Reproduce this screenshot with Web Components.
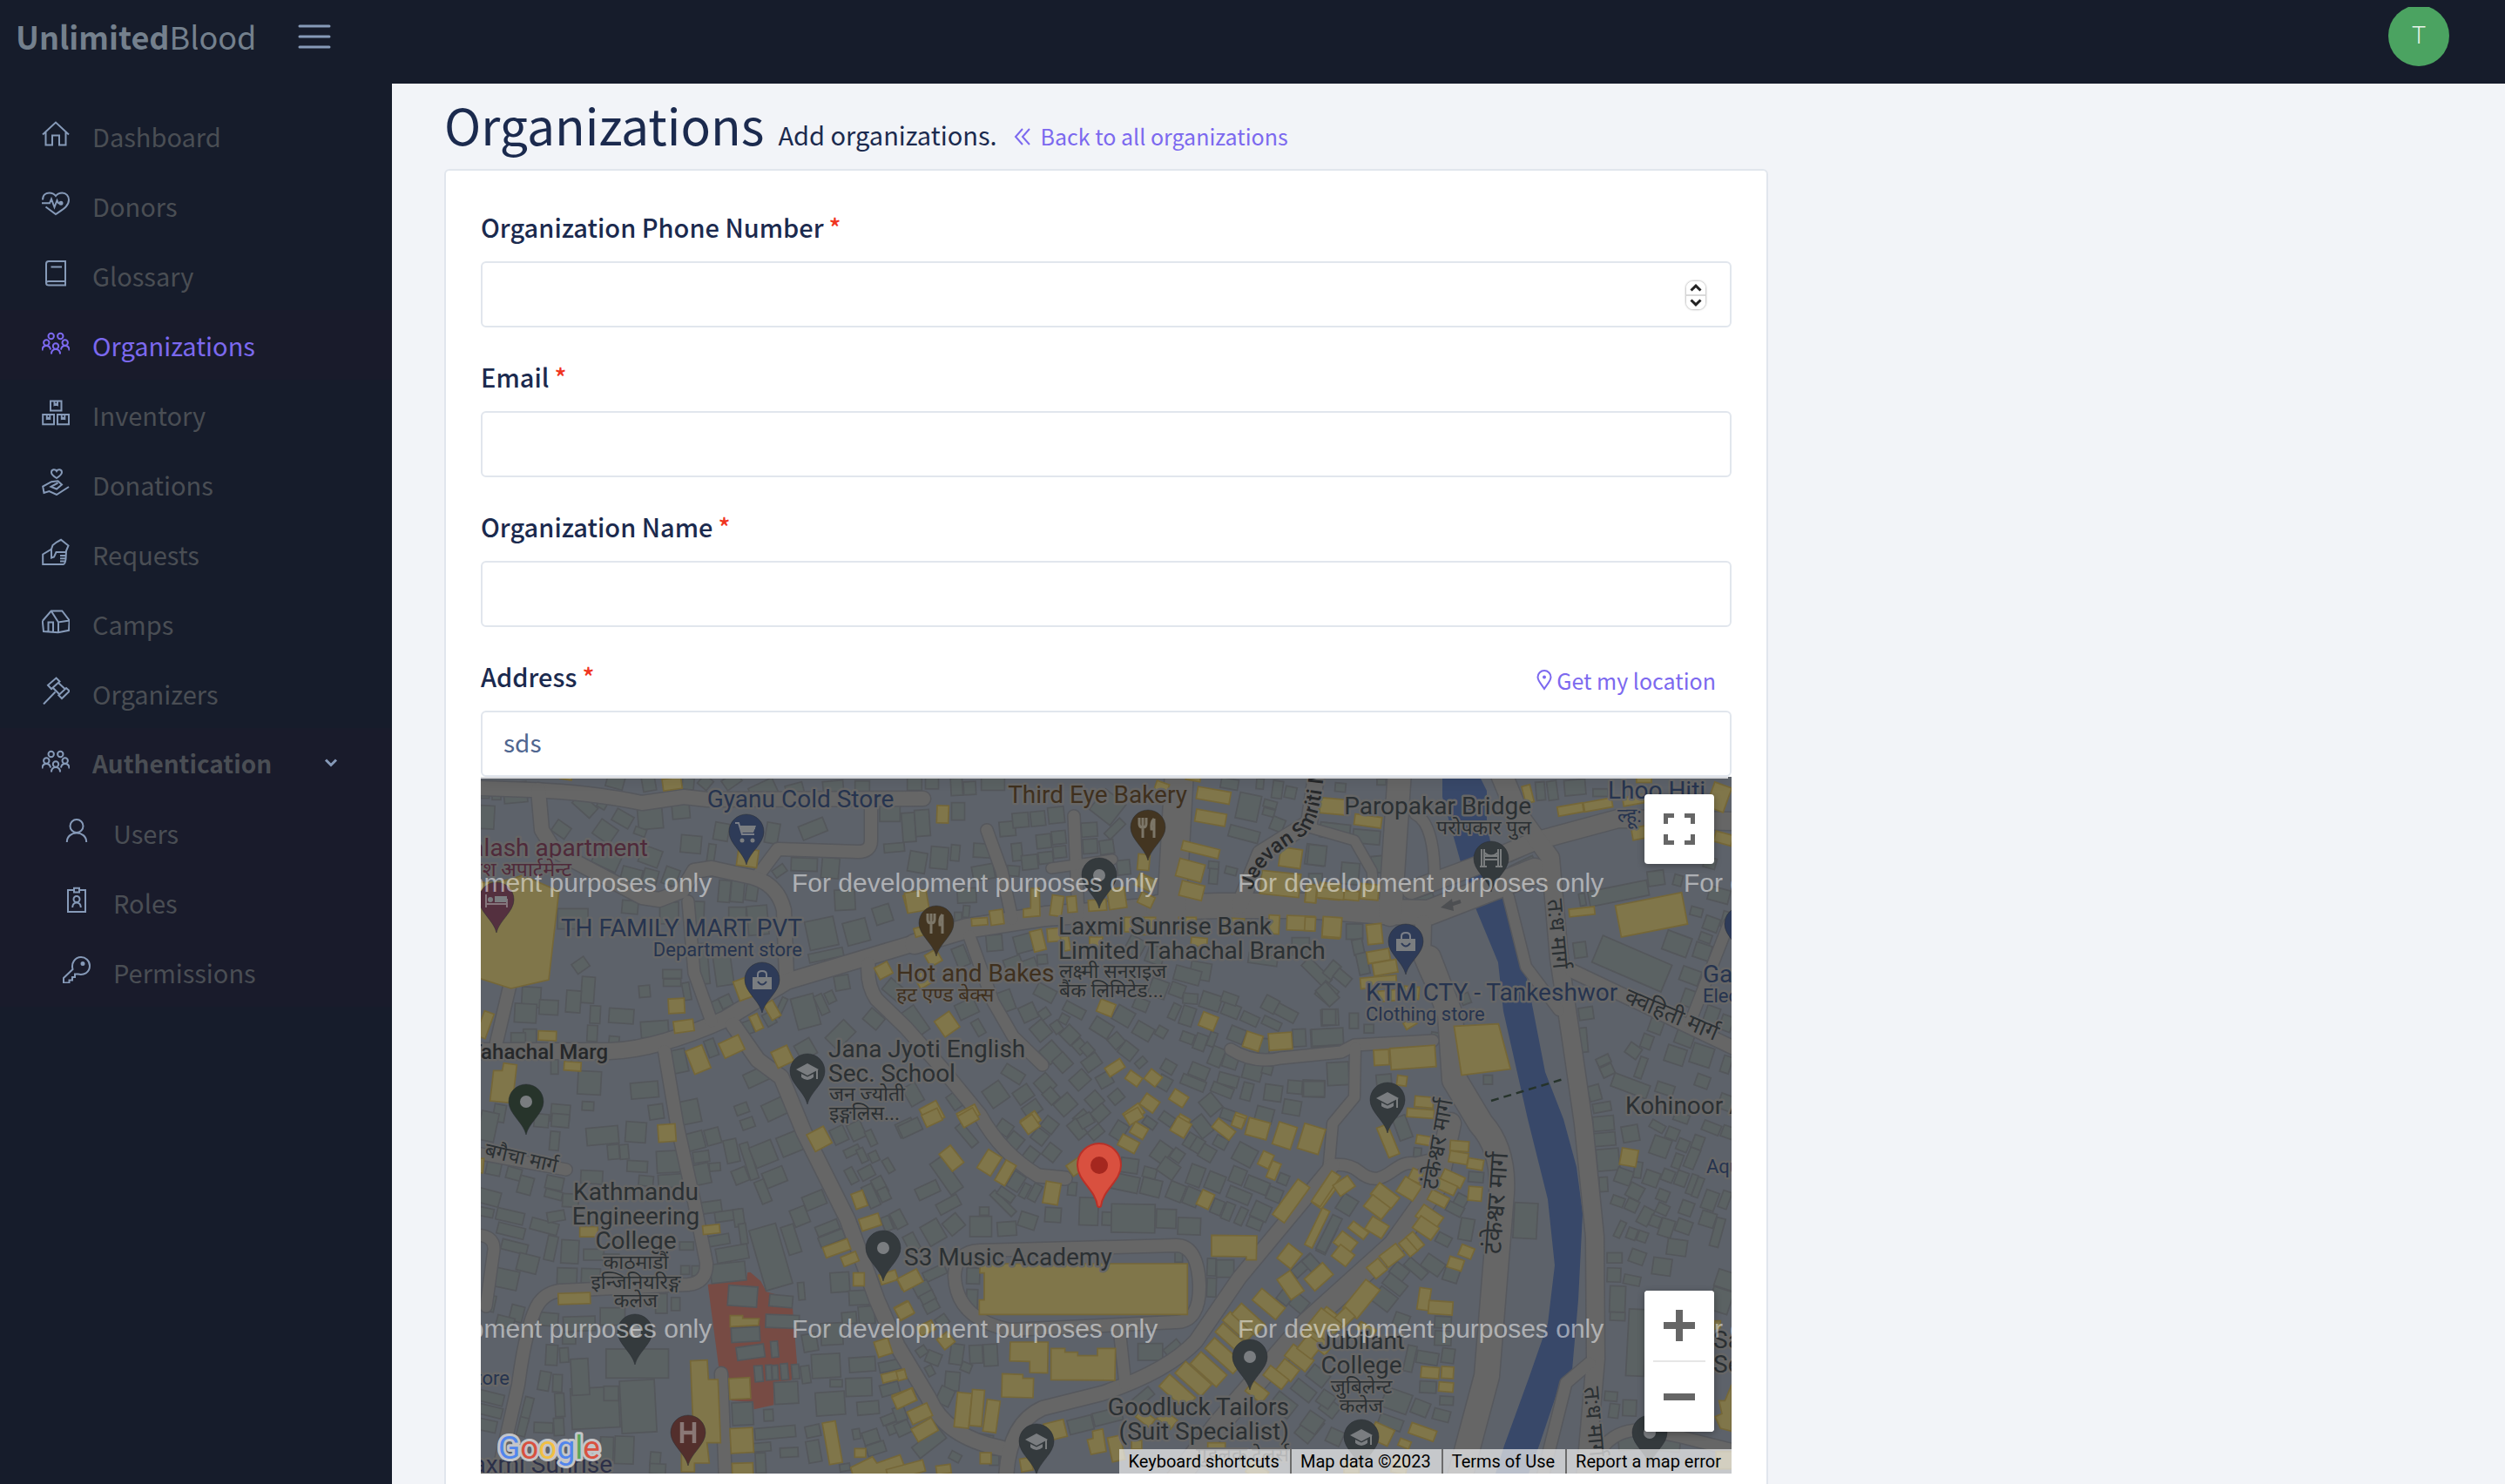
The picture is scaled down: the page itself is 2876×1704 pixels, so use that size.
<!DOCTYPE html>
<html lang="en">
<head>
<meta charset="utf-8">
<title>UnlimitedBlood – Add organizations</title>
<style>
body { margin: 0; background: #f2f4f8; font-family: "Noto Sans CJK JP", "Noto Sans", sans-serif; font-size: 29px; color: #1b2a4e; }
</style>
</head>
<body>
<app-shell>
  <app-header slot="header"></app-header>
  <side-nav slot="nav">
    <nav-item icon="home">Dashboard</nav-item>
    <nav-item icon="donor">Donors</nav-item>
    <nav-item icon="book">Glossary</nav-item>
    <nav-item icon="group" active>Organizations</nav-item>
    <nav-item icon="boxes">Inventory</nav-item>
    <nav-item icon="give">Donations</nav-item>
    <nav-item icon="request">Requests</nav-item>
    <nav-item icon="camp">Camps</nav-item>
    <nav-item icon="gavel">Organizers</nav-item>
    <nav-item icon="group" open>Authentication</nav-item>
    <nav-item icon="user" nested>Users</nav-item>
    <nav-item icon="badge" nested>Roles</nav-item>
    <nav-item icon="key" nested>Permissions</nav-item>
  </side-nav>
  <page-heading heading="Organizations" back="Back to all organizations">Add organizations.</page-heading>
  <form-card>
    <form-field label="Organization Phone Number" type="number"></form-field>
    <form-field label="Email" type="email"></form-field>
    <form-field label="Organization Name" type="text"></form-field>
    <form-field label="Address" type="text" value="sds">
      <locate-link slot="action">Get my location</locate-link>
      <location-map slot="below"></location-map>
    </form-field>
  </form-card>
</app-shell>
<script>
const define = (name, html, init) => customElements.define(name, class extends HTMLElement {
  connectedCallback() {
    if (this.shadowRoot) return;
    const root = this.attachShadow({ mode: 'open' });
    root.innerHTML = typeof html === 'function' ? html(this) : html;
    if (init) init(this, root);
  }
});

const ICONS = {
  home: '<path d="M1 17.5 16 3.5 31 17.5M4.5 15V29.5H12V18.5H20V29.5H27.5V15"/>',
  donor: '<path d="M1 12.5C1 6.5 5 4.5 8.5 4.5C12 4.500 14.500 6 16 8C17.500 6 20 4.500 23.500 4.500C28 4.500 31 8 31 12.500C31 20 24 23.500 16 29L4.500 20.500M0 16.300H9L11 11.500 14.500 21 17.500 13 19 16.300H21"/><circle cx="22" cy="16.300" r="1.500" fill="currentColor"/>',
  book: '<path d="M27 26V3H8Q5 3 5 6V28Q5 30.500 8 30.500H27V26H8Q5 26 5 28M10.500 9.500H23"/>',
  group: '<circle cx="10.700" cy="9" r="3.200"/><circle cx="21.300" cy="9" r="3.200"/><circle cx="5.300" cy="16.500" r="3.200"/><circle cx="26.700" cy="16.500" r="3.200"/><circle cx="16" cy="20.500" r="3.200"/><path d="M.5 25.500C.5 21.500 3 20 5.300 20S9.500 21 10 24.500M31.500 25.500C31.500 21.500 29 20 26.700 20S22.500 21 22 24.500M11 29.500C11 25.500 13 24 16 24S21 25.500 21 29.500"/>',
  boxes: '<path d="M10 3.500H22.500V14.500H10ZM1.200 19H14V30.200H1.200ZM18 19H31V30.200H18Z"/><path d="M14.500 4V8L16.200 7 18 8V4M5.800 20V23.800L7.500 22.800 9.300 23.800V20M22.800 20V23.800L24.500 22.800 26.300 23.800V20"/>',
  give: '<path d="M17 12C12 9 11 7.200 11 5.500C11 1.600 15.500 1.500 17 4C18.500 1.500 23 1.600 23 5.500C23 7.200 21.500 9 17 12Z"/><path d="M18.500 17.500 10.500 21.800 17 24.500 23 19.500 18.500 15.200 11 16.200 1.200 21.500 2.500 29 8.500 27 17 31 31 22"/>',
  request: '<path d="M1.200 19.500 11 13.500 12.500 9 17 5.500 22 2.800 30.500 9.500 28 15.500 27.500 25C27 29.500 26 31 24.500 31H1.200ZM11 13.500V23.500L14 22.500 16.500 17H27.500M21 21H27M21 24.300H27M21 27.500H26.500"/>',
  camp: '<path d="M.8 16 10.700 4.500H23.300L31.700 15.500 19 17.500 10.700 4.500M.8 16 2 28 18.700 29.300 31 26.800 31.700 15.500M19 17.500V29M7.500 28V17.500H13V28.500"/>',
  gavel: '<path d="M2 31.500 15.500 17.500M16.500 1.500 20.500 5.500 11 14 7 9.800ZM28 13 31.800 16.500 23 25 19.300 21.300ZM19 7 26.500 14M13 13 20.500 20.500"/>',
  user: '<circle cx="16" cy="11.500" r="7.500"/><path d="M4.800 30C4.800 16 27.200 16 27.200 30"/>',
  badge: '<path d="M13 5H6V30H26V5H19M13 2.800H19V7.500H13Z"/><circle cx="16" cy="15.500" r="3.500"/><path d="M11.200 25C11.200 17.500 20.800 17.500 20.800 25"/>',
  key: '<path d="M11.500 16 1 26V31.500H7.500V28.500H11V25H14V21.500H17.500C24 23 31 20 31 12C31 6 26 2 21 2C14 2 9.500 9 11.500 16Z"/><circle cx="23" cy="9.500" r="1.500" fill="currentColor"/>'
};
const icon = name => `<svg viewBox="0 0 32 32" width="32" height="32" fill="none" stroke="currentColor" stroke-width="2" aria-hidden="true">${ICONS[name]}</svg>`;

define('app-shell', `
<style>
:host { display: grid; grid-template: auto 1fr / 450px 1fr; height: 100vh; }
header { grid-column: 1 / -1; }
nav { background: #161c2b; }
main { overflow: auto; scrollbar-width: none; display: grid; grid-template-columns: 2fr 1fr; align-content: start; padding: 0 86px 60px 60px; }
::slotted(*:not([slot])) { grid-column: 1; }
</style>
<header><slot name="header"></slot></header>
<nav><slot name="nav"></slot></nav>
<main><slot></slot></main>`);

define('app-header', `
<style>
:host { display: flex; align-items: center; height: 96px; padding: 0 64px 0 18px; background: #161c2b; box-sizing: border-box; }
a { color: #74808d; text-decoration: none; font-size: 36px; line-height: 52px; margin-bottom: 14px; }
.menu { margin: 0 auto 12px 48px; padding: 0; border: 0; background: none; color: #869ab8; line-height: 0; }
.avatar { width: 70px; height: 70px; margin-bottom: 14px; padding: 0; border: 0; border-radius: 50%; background: #4ba361; clip-path: inset(2px 0 0); color: #e8f3ea; font: 300 27px/66px Roboto, sans-serif; }
</style>
<a href="#"><b>Unlimited</b>Blood</a>
<button class="menu" aria-label="Toggle menu"><svg width="38" height="28" viewBox="0 0 38 28" stroke="currentColor" stroke-width="3" stroke-linecap="round"><path d="M2 2H36M2 14H36M2 26H36"/></svg></button>
<button class="avatar">T</button>`);

define('side-nav', `
<style>:host { display: flex; flex-direction: column; padding-top: 20px; }</style><slot></slot>`);

define('nav-item', el => `
<style>
:host { display: block; }
a { display: flex; align-items: center; gap: 26px; height: 80px; padding: 0 62px 0 48px; color: #4a4e54; text-decoration: none; }
.icon { color: #869ab8; line-height: 0; margin-bottom: 6px; }
.chev { margin-left: auto; }
:host([nested]) a { padding-left: 72px; }
:host([nested]) a, :host([open]) a, :host([active]) a { background: #191b2b; }
:host([open]) a { font-weight: 700; font-size: 28px; }
:host([active]) a, :host([active]) .icon { color: #7c69ef; }
</style>
<a href="#"><span class="icon">${icon(el.getAttribute('icon'))}</span><slot></slot>
${el.hasAttribute('open') ? '<svg class="chev" width="16" height="12" viewBox="0 0 16 12" fill="none" stroke="#869ab8" stroke-width="3"><path d="M2 2.500 8 8.500 14 2.500"/></svg>' : ''}</a>`);

define('page-heading', el => `
<style>
:host { display: flex; align-items: baseline; gap: 16px; padding: 12px 0 18px; }
h1 { margin: 0; font-size: 57px; line-height: 68px; font-weight: 400; }
a { color: #7c69ef; text-decoration: none; font-size: 25px; margin-left: 3px; }
svg { margin-right: 11px; }
</style>
<h1>${el.getAttribute('heading')}</h1><slot></slot>
<a href="#"><svg width="20" height="20" viewBox="0 0 20 20" fill="none" stroke="currentColor" stroke-width="2"><path d="M10 1 2 10 10 19M18 1 10 10 18 19"/></svg>${el.getAttribute('back')}</a>`);

define('form-card', `
<style>
:host { display: block; background: #fff; border: 2px solid #e1e6ed; border-radius: 6px; padding: 44px 40px 60px; }
form { display: flex; flex-direction: column; gap: 36px; }
</style><form><slot></slot></form>`);

define('form-field', el => `
<style>
:host { display: block; }
.top { display: flex; justify-content: space-between; align-items: flex-end; margin-bottom: 20px; }
label { font-weight: 500; line-height: 40px; }
i { font-style: normal; color: #f0351f; margin-left: 6px; }
.box { position: relative; }
input { display: block; width: 100%; height: 76px; box-sizing: border-box; padding: 0 24px 4px; border: 2px solid #e1e6ed; border-radius: 6px; background: #fff; color: #506690; font: inherit; font-size: 28px; outline: 0; appearance: textfield; }
input::-webkit-inner-spin-button { appearance: none; }
.step { position: absolute; right: 29px; top: 22px; width: 24px; height: 34px; box-sizing: border-box; display: grid; border: 1px solid #d4d4d4; border-radius: 9px; box-shadow: 0 0 2px rgba(0,0,0,.25); overflow: hidden; }
.step button { display: grid; place-items: center; padding: 0; border: 0; background: #fff; }
.step button + button { border-top: 2px solid #d9d9d9; }
</style>
<div class="top"><label for="f">${el.getAttribute('label')}<i>*</i></label><slot name="action"></slot></div>
<div class="box"><input id="f" type="${el.getAttribute('type')}" value="${el.getAttribute('value') || ''}">
${el.getAttribute('type') === 'number' ? `<div class="step">
<button type="button" aria-label="Increase"><svg width="14" height="9" viewBox="0 0 14 9" fill="none" stroke="#222" stroke-width="3"><path d="M1.500 7.500 7 2.200 12.500 7.500"/></svg></button>
<button type="button" aria-label="Decrease"><svg width="14" height="9" viewBox="0 0 14 9" fill="none" stroke="#222" stroke-width="3"><path d="M1.500 1.500 7 6.800 12.500 1.500"/></svg></button></div>` : ''}
</div><slot name="below"></slot>`);

define('locate-link', `
<style>
:host { display: block; padding-right: 18px; }
a { display: flex; align-items: center; gap: 5px; color: #7c69ef; text-decoration: none; font-size: 25px; line-height: 30px; }
</style>
<a href="#"><svg width="18" height="24" viewBox="0 0 18 24" fill="none" stroke="currentColor" stroke-width="2"><path d="M9 22C5.500 16.500 1.500 12.500 1.500 8.500A7.500 7.500 0 0 1 16.500 8.500C16.500 12.500 12.500 16.500 9 22Z"/><circle cx="9" cy="8.500" r="1" fill="currentColor"/></svg><slot></slot></a>`);

/* Map data. Footprints are "cx cy w h angle" inside a tile; shapes are point lists. */
const TILES = [
{ at: 'translate(550 890) scale(.33333)',
  g: '125 60 80 70 -5;25 145 55 80 3;60 65 30 40 0;20 60 30 40 0;365 105 80 45 42;425 100 30 30 30;495 150 65 45 30;590 150 85 70 -5;695 120 60 60 -5;283 187 55 45 35;435 195 70 60 35;555 195 40 25 20;730 238 70 60 5;590 280 70 60 20;525 345 70 50 15;590 350 50 50 15;660 350 50 60 20;440 290 90 60 25;800 270 25 65 8;835 195 50 60 10;1150 185 90 50 -22;1010 200 45 70 10;1120 308 90 45 2;1210 320 60 70 5;1035 330 45 30 -35;845 400 40 75 5;890 400 45 75 5;940 400 40 65 8;655 475 65 75 0;745 475 60 80 2;520 455 55 45 5;890 480 60 50 0;960 500 70 100 -5;1180 545 100 100 -12;1260 430 70 70 -3;1390 480 60 60 -18;1300 540 80 80 -15;1195 620 120 30 -12;1430 250 70 30 -5;1415 130 70 60 0;323 495 105 70 0;350 655 50 40 -35;375 740 45 90 4;325 780 50 75 4;180 765 65 70 3;240 800 65 50 3;160 820 75 65 3;400 825 35 60 3;390 890 35 55 3;490 830 85 50 4;570 745 38 40 -5;665 685 65 30 0;665 715 60 25 0;715 745 25 60 -10;605 875 95 55 -4;175 900 45 50 0;135 905 50 35 0;465 915 35 30 5;690 985 50 80 -12;800 940 35 60 -20;815 800 40 45 -25;850 780 40 40 -25;770 650 40 140 -5;840 660 60 130 -8;1250 715 50 50 -10;1125 815 80 110 -15;1040 800 20 70 25;1180 790 30 70 -25;1210 765 30 40 -25;925 870 35 45 -20;1000 840 35 45 -30;570 1085 95 55 -5;380 1060 80 80 3;375 1140 40 30 3;955 1040 80 50 -25;1245 895 60 90 45;1125 945 60 60 -30;725 1160 70 80 -12;610 1160 50 50 -8;905 1150 45 35 -20;1020 1150 80 60 -25;280 1165 65 60 5;260 1000 25 60 0;1360 840 60 50 40;70 1165 40 60 10;1430 740 70 50 40;470 20 60 50 15;585 30 45 50 -10;720 30 40 40 5;780 25 40 40 40;870 20 60 40 -35;980 55 90 60 -25;1090 60 60 60 -15;1220 45 70 50 -5;1320 40 50 40 0',
  y: '665 30 65 40 -8;925 285 70 60 8;680 795 55 50 -3;705 865 68 40 -8;235 898 62 32 2;322 1003 58 30 4;755 980 60 85 -22;870 935 75 55 -25;1045 970 60 60 -25;915 735 60 70 -20;955 852 30 55 -25;1010 810 60 35 60;1393 673 50 45 -28;20 860 35 90 20;1485 440 35 60 -15;300 5 40 20 10',
  yp: '0,370 60,370 120,355 150,345 275,400 240,705 110,735 0,700|85,992 130,998 115,1130 38,1122 50,1018 80,1018' },
{ at: 'translate(1030 890) scale(.33333)',
  g: '40 180 45 100 -4;87 165 50 90 -4;205 40 40 60 -3;250 45 42 45 -3;330 30 80 45 0;60 30 50 45 0;120 25 45 45 0;210 125 45 60 0;70 300 60 70 10;145 285 60 75 5;200 268 30 55 5;292 260 58 48 3;297 335 75 50 -10;400 330 42 35 5;380 185 55 50 -5;425 155 55 50 -5;485 150 50 50 -6;548 138 55 55 -6;505 228 50 48 -6;557 215 48 45 -6;413 265 35 60 -6;457 300 55 50 -6;512 285 50 40 -6;560 265 45 40 -6;662 188 55 48 -4;665 245 50 50 -4;722 248 48 48 -8;725 110 90 90 38;750 185 30 75 45;780 318 45 50 -6;240 415 65 50 -3;238 470 22 40 5;210 490 25 35 0;335 578 55 55 -5;435 580 60 60 -15;500 635 35 32 -5;220 625 45 70 -22;400 650 60 45 -20;455 660 55 50 -20;375 778 50 70 -20;510 750 70 45 28;452 818 55 55 -25;240 805 70 55 -25;280 870 30 55 -30;60 850 60 100 -35;495 880 55 60 -40;507 822 35 32 -35;550 868 32 40 -35;575 840 30 30 28;610 810 75 35 28;595 895 50 55 -45;630 935 40 45 -42;530 955 60 60 -42;570 990 50 55 -42;705 870 70 50 32;655 945 35 40 -42;670 990 60 45 -35;755 915 45 45 -42;795 950 55 50 38;780 830 65 55 30;848 882 65 48 30;910 885 35 35 30;840 990 38 25 -42;935 1005 45 40 30;920 1060 45 45 30;715 1050 50 45 -30;630 1050 60 50 -42;510 1065 55 60 -42;400 1030 75 40 32;435 1100 60 50 -35;530 1105 40 50 -42;580 1135 65 55 -42;340 1100 70 70 -35;465 1150 60 45 -35;210 1115 65 55 -35;55 1100 50 70 -30;680 1120 50 50 -42;755 1108 45 40 -40;700 1165 55 45 -42;640 1185 50 50 -42;955 815 28 55 25;1000 830 45 65 18;965 740 50 45 20;1010 770 50 35 5;1080 780 70 55 18;1150 810 60 45 22;1215 840 60 35 25;1290 855 65 30 25;1285 790 50 50 28;1340 820 75 40 28;1145 770 55 35 20;1045 675 70 60 10;1000 690 90 50 15;900 735 60 60 20;840 790 50 40 22;1000 905 45 35 20;1045 920 40 55 20;1085 910 25 50 20;1100 970 45 65 22;1150 980 50 60 18;1170 895 55 50 22;1040 1020 65 45 22;1020 1060 85 35 22;1140 1050 70 40 15;1120 1085 75 35 22;1205 1090 35 60 15;1225 1020 65 60 15;1275 1015 35 30 15;1295 1095 60 55 8;1080 1135 55 65 -40;1140 1170 50 35 20;1265 1170 60 50 15;1360 1145 60 50 10;1370 1075 50 45 5;1435 1080 75 58 2;1265 935 35 55 5;1385 905 45 60 -3;1470 905 90 60 -3;1490 835 60 55 -3;1210 110 75 90 12;1285 100 45 25 15;1280 128 40 25 15;1310 170 45 45 22;1195 203 105 40 15;1090 345 30 60 5;1150 330 40 25 15;1090 310 35 25 5;1145 30 60 35 10;1440 275 65 70 8;1490 190 50 50 5;1310 50 35 60 8;1355 60 38 40 12;1250 30 25 35 5;1445 680 110 40 45;1480 750 60 60 40;1260 635 100 35 8;1390 590 60 60 0;820 590 60 60 28;890 620 60 60 20',
  y: '157 135 40 60 2;68 435 75 70 -10;75 540 30 30 -15;125 630 45 45 -30;95 700 60 50 -30;284 505 55 25 -4;343 490 45 50 -8;550 450 40 70 8;602 445 32 55 -5;690 448 62 38 -4;757 425 60 70 -8;849 300 40 55 5;855 370 60 45 25;858 430 50 40 25;485 570 42 72 -14;545 550 55 45 -5;580 580 28 50 -10;685 575 45 35 0;1040 575 55 30 5;795 515 25 50 0;865 520 50 60 0;1000 510 60 40 0;1150 520 90 55 3;1298 515 36 64 3;1390 510 95 50 2;1495 527 60 70 4;1090 70 115 42 10;1080 147 105 42 10;1045 257 130 32 14;1010 328 90 62 15;1015 398 80 52 14;1355 285 75 65 8;1320 375 135 80 6;1425 418 38 40 5;1490 400 70 55 5;910 45 45 40 20;720 802 55 45 22;172 858 62 65 -35;1072 848 55 50 22;1225 917 58 55 18;1320 917 80 58 -4;750 1008 62 35 -33;815 1045 50 35 35;882 1043 48 42 38;870 1130 55 45 35;970 1113 55 42 32;815 1165 65 40 -35;120 1165 65 65 -28;245 1168 70 40 -28;460 1190 60 40 -35;1180 1185 40 35 20;985 1190 40 30 30;1485 105 60 45 8;1020 10 50 18 10',
  yp: '460,390 490,390 492,485 435,490 435,462 460,458' },
{ at: 'translate(1500 740) scale(.34439 .35077)',
  g: '113 468 35 28 5;250 450 30 20 0;95 610 100 48 6;200 630 90 45 5;270 655 25 45 5;35 690 60 65 6;238 720 42 55 -5;145 750 60 70 5;30 770 45 40 0;780 480 30 60 -5;820 478 32 62 -8;895 468 70 50 -5;980 485 50 25 0;695 680 50 45 -25;720 722 85 28 -25;1165 765 55 48 -8;1040 815 200 50 -11;1238 772 28 35 15;920 835 20 40 -10;1375 820 70 45 15;1300 875 40 28 15;1350 915 50 45 20;1330 960 40 28 20;1235 980 85 65 20;1320 1005 55 50 18;1280 1085 65 48 20;1085 1045 250 95 23;912 1000 42 50 -8;932 1208 48 40 -8;922 1295 28 80 -5;160 940 55 50 0;172 990 35 50 -12;188 1045 35 70 -12;75 1220 45 52 0;158 1232 30 50 0;208 1258 32 28 0;70 1285 105 55 -3;105 1405 72 75 -3;25 1455 70 50 0;430 1285 30 30 10;605 1425 30 30 0;258 1425 50 35 -5;85 1065 35 55 40;120 1090 55 35 40;70 1145 70 45 48;1165 1250 45 45 20;1280 1160 55 55 20;1135 1300 35 45 20;1090 1330 45 40 35;1260 1290 60 45 20;1350 1215 45 60 20;1400 1240 40 50 20;1230 1345 65 55 18;1318 1345 70 65 18;1115 1385 25 70 20;990 1362 45 28 -25;1003 1395 42 35 -25;1080 1445 125 45 20;1195 1455 60 35 18;960 1468 40 50 -15;985 1515 60 30 -10;1320 1430 45 40 20;1400 1500 50 50 20;1400 1375 30 55 18;1345 715 40 35 15;1400 900 30 50 15;385 835 80 20 -18;530 1160 30 35 -20',
  y: '90 530 90 50 5;205 578 90 35 8;738 490 28 58 -15;880 540 85 30 -10;972 525 95 30 -10;1090 510 70 28 -10;1125 443 50 18 0;1375 500 60 85 20;1120 615 70 40 -10;1390 635 60 35 15;1150 885 225 105 -11;918 875 85 25 -6;85 925 62 65 4;12 915 35 45 3;227 948 50 65 -6;240 1020 75 38 -10;262 1058 80 42 -10;240 1105 120 35 -5;80 815 90 35 5;150 822 50 30 5;210 810 60 50 5;15 815 35 60 5;355 1352 150 70 -4;250 1352 50 50 -3;318 1428 32 32 8;392 1498 62 35 5;380 1535 90 28 4;270 1150 60 35 -5;345 1240 40 25 -30;350 1140 50 40 5',
  yp: '492,1250 640,1242 680,1390 517,1410' },
{ at: 'translate(550 1280) scale(.33333)',
  rp: '788,585 922,560 925,543 935,543 970,573 990,610 1027,620 1080,665 1095,855 1075,915 1015,920 1015,1000 947,1015 945,990 870,985 860,905 825,865',
  g: '908 625 100 70 4;1040 642 80 40 5;1045 712 115 45 2;918 757 98 50 -3;935 818 95 45 -8;1018 808 24 55 -5;963 892 28 55 -5;998 888 20 52 -3;1020 888 20 50 -3;1052 885 25 55 -5;1090 885 25 50 -5;1058 958 82 75 -3;908 1030 72 78 -3;1125 895 30 60 -8;997 1035 32 40 -3;1020 1095 140 40 -5;425 72 110 60 -5;540 60 70 70 4;260 90 32 65 5;280 20 60 45 5;215 20 50 45 5;463 128 40 50 -5;500 128 30 50 -5;545 178 70 38 3;652 162 80 75 -3;745 90 60 60 -15;805 75 50 55 -15;765 145 55 38 -8;870 125 45 80 -12;812 180 38 28 -5;765 205 60 70 -12;930 160 30 130 -18;980 135 80 75 -22;1070 100 75 70 -22;900 210 50 50 -22;1018 215 75 55 -22;978 265 35 80 -22;925 30 45 35 -20;388 215 75 45 3;575 228 50 35 5;660 228 85 45 -4;50 185 50 45 12;120 203 50 40 15;160 243 48 60 15;260 235 60 45 12;257 275 60 28 15;35 285 75 50 15;20 335 60 30 12;107 350 95 40 13;110 400 95 38 14;225 385 95 40 15;265 350 60 35 -10;315 295 55 45 3;122 455 90 35 14;168 512 70 60 14;90 565 90 65 12;248 460 35 85 12;313 472 60 80 3;303 557 68 58 2;385 555 65 50 2;395 482 70 38 0;455 500 55 40 0;800 318 70 40 -8;855 348 85 35 -8;895 355 35 60 -8;820 433 85 35 -10;872 478 110 50 -10;910 410 25 70 -8;715 452 48 28 0;710 535 30 30 0;748 538 30 35 0;858 543 120 65 -6;1005 490 95 215 -16;1075 430 45 100 -18;1105 350 55 60 -22;1155 295 75 50 -22;1200 390 80 35 -22;1215 425 90 35 -22;1335 200 50 40 -28;1283 210 30 55 -28;1380 245 40 60 -28;1350 280 38 80 -25;1395 275 35 45 -25;1285 125 55 28 -25;1320 140 25 50 -25;1360 145 30 35 -25;1410 175 25 50 -30;1240 70 50 55 -25;1300 55 50 60 -25;1350 80 25 55 -25;1470 45 60 50 -25;1405 375 30 50 -22;1440 365 35 45 -22;1243 577 65 68 -4;1110 608 22 60 -5;1312 630 75 50 -3;1335 690 55 60 -5;1275 700 50 40 -5;1215 755 75 75 -3;1140 785 50 60 -10;1195 865 98 82 -3;1320 860 90 50 -4;1415 865 75 35 -12;1308 938 90 62 -2;1415 945 65 40 -15;1210 995 100 80 -4;1340 1010 75 45 -5;1230 925 42 25 0;1300 1100 25 35 -10;1350 1110 55 45 -18;1420 1045 70 30 -22;1440 1075 70 35 -22;1367 1150 65 38 -18;1150 1090 50 40 -12;1153 1160 45 75 -10;1260 1215 35 25 -8;1068 1163 62 32 -3;975 1145 60 30 -5;970 1200 35 70 -3;545 857 215 100 0;548 1005 120 180 -3;400 1010 165 140 -3;455 960 50 50 0;348 903 60 125 -3;225 917 38 65 10;270 925 32 60 2;293 828 30 50 -3;250 828 40 70 3;278 1000 32 80 -3;222 1078 65 35 2;275 1075 35 60 -3;165 1015 30 85 14;150 1075 30 65 14;440 1150 45 80 2;500 1155 65 95 2;607 1185 35 45 5;615 1220 55 35 3;240 705 65 45 5;345 720 110 50 -2;310 770 45 40 0;460 695 85 60 0;628 650 40 68 0;677 652 30 45 0;40 650 30 55 12;130 685 45 55 14;90 715 60 40 14;40 975 90 38 14;35 1020 90 35 14;25 1070 70 40 12;30 40 60 100 12',
  y: '647 63 60 60 -4;1172 83 65 65 -28;800 395 58 30 -6;378 403 62 35 0;328 633 110 38 -2;1310 293 42 55 -20;1347 370 70 42 -18;1232 460 90 38 -20;1277 497 55 35 -22;1308 567 38 45 0;1410 560 60 35 -18;1480 570 70 40 -25;1463 675 50 50 -28;1392 802 50 55 -18;1428 900 82 30 -14;1465 975 75 45 -20;898 943 72 72 -3;905 1122 78 85 -3;908 1225 72 50 -2;1217 1130 45 145 -10;1313 1165 38 30 0;5 175 20 50 5',
  yp: '865,692 908,692 908,702 965,702 962,725 865,730|728,848 786,845 790,912 823,912 832,1130 785,1130 793,1200 742,1200 742,1230 697,1230 697,1150 740,1130|1280,1215 1355,1178 1370,1200 1450,1172 1465,1210 1440,1250 1290,1250' },
{ at: 'translate(1030 1280) scale(.33333)',
  g: '45 45 75 45 -25;240 70 30 90 -40;170 210 50 130 -35;105 260 80 42 -25;177 310 80 40 -28;125 405 65 75 -30;195 378 60 55 -40;50 440 40 60 -28;5 360 40 60 -28;288 385 75 70 0;300 332 32 28 0;378 393 65 48 -4;450 365 60 50 18;537 345 55 50 4;365 305 25 105 -45;375 275 60 30 35;405 90 50 50 40;370 45 50 45 35;462 138 45 45 38;532 130 50 50 38;492 75 50 45 38;525 35 50 45 38;410 230 45 60 32;440 262 25 50 28;475 268 30 60 28;603 255 30 45 5;660 333 65 95 2;722 358 32 45 2;800 175 60 50 8;785 235 95 55 12;813 357 150 98 1;927 358 68 65 2;1006 384 78 58 2;875 250 68 58 14;870 200 45 35 15;620 50 65 40 50;685 60 50 35 -40;650 20 50 40 -30;765 55 45 60 32;910 130 55 65 35;935 185 65 55 35;965 140 40 40 35;1010 90 35 50 32;1035 105 35 50 32;1068 132 50 48 30;1050 40 50 70 -38;1115 95 45 38 28;870 28 45 30 35;930 15 50 35 35;1198 138 72 65 28;1028 210 50 70 20;960 265 55 60 22;1015 283 50 60 22;1095 232 60 60 22;1173 210 50 55 22;1240 243 80 45 22;1178 278 80 42 22;1300 275 50 45 22;1330 222 35 35 22;1103 318 38 50 22;1140 333 32 60 22;1185 350 28 60 25;1253 333 60 55 25;1232 375 50 35 22;1083 525 30 60 2;1130 530 60 60 0;1083 595 32 65 2;262 555 45 55 2;258 637 38 70 2;970 488 26 40 0;130 545 80 35 -25;87 600 55 45 -28;105 630 50 35 -28;118 660 50 35 -28;155 710 40 35 -35;872 817 85 58 0;950 805 60 35 -40;205 825 45 70 8;272 825 45 62 -3;322 828 48 75 -3;125 838 50 42 22;85 815 35 30 -35;113 882 25 35 -28;238 870 35 30 22;190 918 50 65 5;165 970 50 60 25;632 1068 85 50 -14;725 1040 100 45 -14;845 975 80 35 -40;293 1115 75 30 8;110 1130 115 48 -38;200 1178 38 28 28;335 1190 32 35 0;1385 650 55 50 40;1335 630 45 40 38;1400 520 90 35 -42;1480 430 35 100 26;1400 950 80 45 38;1450 900 70 50 38;1330 1000 80 60 38;1420 1080 90 60 -50;1490 1010 60 50 38;20 1080 50 45 -25;10 1030 40 50 -20',
  y: '120 10 60 45 -25;245 10 60 45 -30;458 33 50 50 -35;815 5 55 40 -30;833 55 52 42 30;797 100 65 42 28;977 43 55 55 30;1125 50 75 38 38;1175 25 38 38 20;1242 48 75 60 15;1335 72 65 80 18;1427 83 75 90 17;187 150 50 75 -38;318 165 55 75 32;373 200 40 80 30;533 270 52 75 10;615 180 50 45 -35;1270 155 40 50 25;1297 192 32 60 22;1062 292 45 55 25;1357 297 50 150 36;1480 265 40 120 36;1447 390 28 140 26;1352 487 60 65 38;1355 587 55 85 -35;1452 558 85 55 -42;1280 652 105 52 40;227 1018 50 120 6;275 1010 42 125 5;325 1038 45 110 8;45 570 75 50 -28;25 675 55 45 -28;100 735 55 35 -25;168 778 45 45 -38;15 897 30 32 -15;25 978 75 45 -25;78 1030 75 48 -25;95 1085 80 50 -30;1175 730 110 40 42;1210 705 110 50 42;1150 770 110 40 42;1125 830 130 50 42;1073 877 120 55 42;1020 910 120 55 42;965 955 120 55 42;1385 838 90 50 38;1345 880 65 50 38;1305 905 80 42 38;1240 955 70 45 38;1450 770 110 60 40;1480 700 50 60 38;545 1087 70 60 -14;755 1150 45 85 -12;445 1205 40 45 -10;305 1183 38 38 0;160 1222 50 30 -8;30 1225 130 40 -15;930 1050 60 40 38;855 1045 60 35 38;825 1137 35 30 0;1100 1140 60 20 0;1240 1230 70 40 30',
  yp: '1083,415 1239,417 1237,500 1203,500 1203,489 1083,487|285,513 1000,513 1000,688 283,688 283,638 300,638 300,545 285,545|390,783 520,783 518,890 457,888 457,850 388,848|530,805 578,805 578,818 622,818 622,830 690,830 690,805 752,805 750,915 530,913|362,892 433,895 433,908 470,908 468,975 360,972|655,1120 675,1115 673,1090 708,1082 720,1160 668,1170' },
{ at: 'translate(1500 1280) scale(.34439 .33333)',
  g: '320 45 45 80 -20;370 130 25 32 5;565 215 50 35 5;533 395 45 75 10;457 430 48 35 28;515 295 40 40 28;495 325 55 35 28;422 518 70 50 35;483 550 50 50 18;365 530 80 35 42;310 540 55 45 38;295 585 75 45 38;260 635 70 60 38;135 310 55 60 32;75 410 35 130 26;730 365 78 122 3;990 30 70 50 -5;990 85 80 45 -5;1005 155 75 75 -5;990 240 28 50 -3;1080 65 55 55 -10;1058 213 55 50 20;1105 190 25 55 8;1150 220 50 50 20;1095 265 50 50 28;1038 298 42 32 20;1085 312 40 40 25;1188 278 38 38 22;1205 210 40 40 22;1250 220 38 50 20;1237 160 28 50 20;1285 150 35 70 22;1180 110 60 65 20;1255 105 38 40 22;1305 95 35 45 20;1220 65 40 40 22;1350 45 60 35 22;1170 40 50 28 30;1405 60 40 40 20;1250 10 50 30 20;1285 240 22 70 20;1305 250 22 70 20;1345 295 45 65 20;1395 293 30 60 20;1267 322 42 48 20;1130 350 40 60 28;1163 367 35 38 20;1187 325 40 35 25;1200 390 45 60 18;1258 385 50 45 20;1338 360 50 50 18;1370 405 30 100 15;1045 395 22 58 25;1085 410 32 38 20;1120 420 32 35 20;1235 457 65 55 8;1103 490 50 45 20;1185 523 62 58 8;1027 493 50 35 0;1025 552 45 48 2;1085 570 55 32 12;1037 635 52 90 2;1037 695 50 28 2;1100 785 60 230 3;1400 570 70 60 18;1380 640 70 80 18;1015 970 42 32 5;1025 1020 32 48 8;1077 1010 45 55 2;455 715 55 40 3;455 770 55 50 3;403 838 72 42 10;472 830 42 50 8;345 840 30 90 12;405 938 55 40 3;467 985 45 30 3;380 1010 55 50 22;450 1035 55 38 15;300 985 90 70 20;280 1060 80 40 20;315 710 50 50 20;95 1110 50 50 25;20 1060 60 60 35;65 980 50 50 35;1210 1140 70 40 5;1080 1130 80 50 -5;15 510 40 50 -42',
  y: '272 90 38 110 -22;392 88 52 30 10;510 108 62 35 4;507 148 62 38 10;563 170 52 35 10;562 272 45 48 5;487 220 75 40 25;465 248 70 35 25;440 290 65 38 28;365 210 40 40 25;342 255 65 60 32;262 280 85 50 38;235 318 75 50 38;410 352 80 50 35;398 390 75 50 35;235 388 65 50 32;340 455 35 60 -40;362 435 30 60 -40;285 485 70 50 -38;235 530 50 50 -40;173 398 65 30 38;130 440 65 50 38;122 485 60 50 38;65 255 35 125 33;125 245 60 45 -35;533 472 45 38 22;497 513 50 38 18;183 635 60 125 38;125 700 60 45 -45;60 725 90 80 38;392 635 38 75 8;447 665 80 45 4;200 740 60 30 30;10 800 60 60 38;412 888 60 38 5;470 888 40 40 3;465 938 48 32 5;387 1093 88 38 20;250 1100 70 60 25;327 1133 38 26 22;1075 147 55 58 10;150 1215 50 40 0;310 1210 50 50 10;1370 725 20 30 0;1395 1190 60 60 0',
  yp: '1417,930 1395,985 1375,985 1385,1030 1362,1040 1380,1080 1417,1090' }
];

/* "width|path" */
const ROADS = [
 '16|M552 905L610 907Q680 910 737 922L785 915 812 918L1060 917','14|M1000 919V965Q1000 978 985 978L893 975 872 1003',
 '16|M618 907L622 953 637 977 737 1030 757 1033 783 1023 797 1000 817 997 863 1007Q893 1015 900 1045L903 1120',
 '18|M552 1207H700Q755 1205 833 1170L903 1127 1050 1083','22|M1050 1084L1110 1066 1200 1052 1330 1042','28|M1330 1042L1400 1040 1500 1040 1590 1047 1640 1048 1720 1017 1762 1000',
 '20|M1620 1022L1693 995 1762 966 1858 940 1988 943','13|M790 1035L797 1117 817 1173','17|M842 1177L870 1217 897 1237 923 1300 973 1400 1007 1493 1030 1545 1066 1605Q1085 1650 1150 1663',
 '14|M763 1207L777 1290 797 1380 811 1450Q812 1473 790 1475L643 1482Q622 1485 614 1505Q603 1530 595 1590L570 1700','14|M585 1133L570 1197','13|M545 1418Q568 1418 567 1435L558 1500',
 '13|M1133 953L1150 1000 1162 1055','13|M1233 937L1238 1050','11|M1207 997L1277 987','13|M1113 1075L1140 1150 1163 1190 1197 1223',
 '15|M997 1107Q995 1130 1006 1147L1040 1180 1080 1225 1125 1280Q1150 1325 1192 1350L1223 1353','32|M1354 885L1345 1045','18|M1512 885L1503 945 1447 980 1423 1040','11|M1503 950L1555 965 1575 1000 1578 1030','26|M1607 885L1596 1050',
 '12|M1625 935Q1647 945 1647 1010','24|M1722 885L1745 940','20|M1740 930L1780 985 1790 1100 1805 1200 1818 1290 1831 1420 1832 1560 1820 1700','12|M1732 1030L1752 1110 1790 1160',
 '18|M1634 1060L1633 1100Q1645 1130 1665 1165','28|M1640 1100L1665 1165 1670 1240 1700 1290Q1727 1320 1724 1370L1707 1580 1675 1700','13|M1413 1205Q1440 1222 1470 1215L1540 1208 1555 1200 1645 1195','12|M1556 1203L1555 1260 1530 1290 1526 1335',
 '13|M1526 1338Q1548 1335 1560 1345C1590 1370 1600 1330 1625 1336L1650 1330','24|M1665 1290L1650 1360 1600 1430 1500 1520 1400 1635 1350 1700','16|M1530 1338L1423 1467 1373 1540Q1340 1575 1265 1600L1197 1617Q1157 1635 1155 1700',
 '14|M1096 1465Q1097 1437 1125 1436L1350 1430Q1375 1430 1377 1475 1378 1518 1350 1518L1160 1527Q1098 1515 1096 1465Z','13|M1285 1525L1292 1590','14|M828 1577L833 1700','15|M1805 1115L1990 1203','12|M1985 1060L1940 1175',
 '13|M1825 1565L1798 1588 1770 1700','13|M1838 1665Q1855 1640 1890 1642L1930 1650 1990 1665','13|M552 1325L650 1343'
].map(r => r.split('|'));

const PIN_ICONS = {
  dot: '<circle cy="-38" r="7"/>',
  cart: '<path d="M-13-48H-9L-5-35H9M-7-42H10" fill="none" stroke="#7b7f88" stroke-width="2"/><path d="M-8-45H11L8-37H-6Z"/><circle cx="-5" cy="-28" r="2.500"/><circle cx="7" cy="-28" r="2.500"/>',
  bag: '<path d="M-11-41H11V-27H-11Z"/><path d="M-5-41V-44Q-5-48 0-48T5-44V-41" fill="none" stroke="#7b7f88" stroke-width="2"/><path d="M-5-36Q0-29 5-36" fill="none" stroke="#2e3b58" stroke-width="2"/>',
  bed: '<path d="M-12-44V-29M-12-33H12M12-29V-39" fill="none" stroke="#85757c" stroke-width="2"/><circle cx="-7" cy="-38" r="3"/><path d="M-2-42H12V-35H-2Z"/>',
  food: '<path d="M-10-49V-42Q-10-38-6-38V-26M-6-49V-38M-2-49V-42Q-2-38-6-38M7-48V-26M7-48Q3-44 4-36H7" fill="none" stroke="#7c7668" stroke-width="3"/>',
  school: '<path d="M-13-40 0-47 13-40 0-33Z"/><path d="M-7-35V-31Q0-25 7-31V-35L0-31.500Z"/><path d="M11-40V-29" stroke="#7a7d7e" stroke-width="2"/>',
  bridge: '<path d="M-11-49V-29M-8-49V-29M11-49V-29M8-49V-29M-8-37H8M-8-41H8M-13-29H-5M13-29H5M-8-45Q0-38 8-45" fill="none" stroke="#7a7d7e" stroke-width="2"/>',
  H: '<path d="M-7-50V-26M7-50V-26M-7-38H7" fill="none" stroke="#8a7876" stroke-width="4.500"/>'
};
const PINS = [[857,993,'cart','#2e3b58'],[875,1163,'bag','#2e3b58'],[570,1071,'bed','#54303f'],[604,1303,'dot','#27342b'],[927,1268,'school','#343a3d'],[1318,988,'food','#433521'],[1075,1098,'food','#433521'],[1262,1043,'dot','#343a3d'],[1014,1471,'dot','#343a3d'],[729,1567,'dot','#343a3d'],[790,1683,'H','#532f2c'],[1190,1693,'school','#343a3d'],[1435,1596,'dot','#343a3d'],[1712,1024,'bridge','#343a3d'],[1614,1119,'bag','#2e3b58'],[1593,1301,'school','#343a3d'],[1563,1688,'school','#343a3d'],[1894,1683,'dot','#343a3d'],[2000,1099,'bag','#2e3b58']];

/* x, baseline, text, anchor, class, rotation */
const LABELS = [
 [919,927,'Gyanu Cold Store','m','b'],[744,983,'Kalash apartment','e','p'],[656,1006,'कलश अपार्टमेन्ट','e','p h'],[921,1075,'TH FAMILY MART PVT','e','b'],[921,1098,'Department store','e','b s'],
 [698,1216,'Tahachal Marg','e','r'],[1260,922,'Third Eye Bakery','m','o'],[1029,1127,'Hot and Bakes','s','o'],[1029,1150,'हट एण्ड बेक्स','s','o h'],
 [1215,1073,'Laxmi Sunrise Bank','s','k'],[1215,1101,'Limited Tahachal Branch','s','k'],[1216,1123,'लक्ष्मी सनराइज','s','k h'],[1216,1145,'बैंक लिमिटेड...','s','k h'],
 [951,1214,'Jana Jyoti English','s','k'],[951,1242,'Sec. School','s','k'],[952,1264,'जन ज्योती','s','k h'],[952,1286,'इङ्गलिस...','s','k h'],
 [730,1378,'Kathmandu','m','k'],[730,1406,'Engineering','m','k'],[730,1434,'College','m','k'],[730,1457,'काठमाडौं','m','k h'],[730,1480,'इन्जिनियरिङ्ग','m','k h'],[730,1501,'कलेज','m','k h'],
 [1038,1453,'S3 Music Academy','s','k'],[597,1337,'बगैचा मार्ग','m','k h',13],[585,1590,'Store','e','b s'],[703,1691,'Laxmi Sunrise','e','v'],
 [1480,1625,'Goodluck Tailors','e','k'],[1480,1653,'(Suit Specialist)','e','k'],[1480,1678,'गुडलक टेलर्स','e','k h'],
 [1563,1549,'Jubilant','m','k'],[1563,1577,'College','m','k'],[1563,1600,'जुबिलेन्ट','m','k h'],[1563,1622,'कलेज','m','k h'],
 [1758,935,'Paropakar Bridge','e','k'],[1758,958,'परोपकार पुल','e','k h'],[1846,917,'Lhoo Hiti','s','b'],[1857,944,'ल्हू:','s','b h'],
 [1568,1149,'KTM CTY - Tankeshwor','s','b'],[1568,1172,'Clothing store','s','b s'],[1955,1128,'Ga','s','b'],[1955,1151,'Elec','s','b s'],
 [1866,1279,'Kohinoor A','s','k'],[1959,1347,'Aqu','s','b s'],[1967,1548,'Sa','s','k'],[1967,1576,'Se','s','k'],
 [1659,1315,'टंकेश्वर मार्ग','m','k h j',-80],[1727,1382,'टंकेश्वर मार्ग','m','k h l',-86],[1780,1073,'त:ध मार्ग','m','k h j',85],[1822,1633,'त:ध मार्ग','m','k h j',85],[1916,1173,'क्वहिती मार्ग','m','k h j',23]
];

const rects = (s, c) => `<g class="${c}">` + s.split(';').map(r => { const [x, y, w, h, a] = r.split(' ').map(Number); return `<rect x="${x - w / 2}" y="${y - h / 2}" width="${w}" height="${h}" transform="rotate(${a || 0} ${x} ${y})"/>`; }).join('') + '</g>';
const polys = (s, c) => s ? `<g class="${c}">` + s.split('|').map(p => `<polygon points="${p}"/>`).join('') + '</g>' : '';
const tiles = f => TILES.map(t => `<g transform="${t.at}">${f(t)}</g>`).join('');
const ANCHOR = { s: 'start', m: 'middle', e: 'end' };

const mapSvg = () => `
<svg class="map" viewBox="552 892 1436 800" preserveAspectRatio="xMidYMid slice" role="img" aria-label="Map">
<defs><path id="jeevan" d="M1437 1023C1448 992 1468 976 1492 963 1512 950 1516 930 1522 870"/></defs>
<polygon fill="#384869" points="1656,890 1656,915 1670,965 1677,990 1693,1040 1720,1105 1726,1161 1754,1285 1777,1377 1785,1453 1777,1520 1755,1583 1727,1660 1717,1692 1755,1692 1767,1660 1793,1583 1805,1573 1812,1493 1817,1393 1810,1340 1795,1285 1774,1231 1755,1133 1741,1070 1727,1028 1707,950 1707,908 1698,890"/>
${tiles(t => polys(t.rp, 'red') + rects(t.g, 'grey'))}
<g fill="none" stroke="#56585d" stroke-linecap="round" stroke-linejoin="round">${ROADS.map(([w, d]) => `<path stroke-width="${+w + 3}" d="${d}"/>`).join('')}</g>
<g fill="none" stroke="#666" stroke-linecap="round" stroke-linejoin="round">${ROADS.map(([w, d]) => `<path stroke-width="${w}" d="${d}"/>`).join('')}</g>
${tiles(t => polys(t.yp, 'gold') + rects(t.y, 'gold'))}
<path d="M1712 1264 1795 1239" stroke="#26332b" stroke-width="2.500" stroke-dasharray="9 6"/>
<path d="M1677 1035 1662 1040" stroke="#4d4f52" stroke-width="4"/><path fill="#4d4f52" d="M1654 1042 1667 1032 1669 1046Z"/>
<g class="labels">${LABELS.map(([x, y, t, a, c, r]) => `<text x="${x}" y="${y}" text-anchor="${ANCHOR[a]}" class="${c}"${r ? ` transform="rotate(${r} ${x} ${y})"` : ''}>${t}</text>`).join('')}
<text class="r"><textPath href="#jeevan">Jeevan Smriti M</textPath></text></g>
${PINS.map(([x, y, k, c]) => `<g transform="translate(${x} ${y})"><path fill="${c}" stroke="#2a2e33" stroke-opacity=".5" d="M0 0C-3-14-20-24-20-38A20 20 0 1 1 20-38C20-24 3-14 0 0Z"/><g fill="#7a7d80">${PIN_ICONS[k]}</g></g>`).join('')}
<g transform="translate(1262 1386)"><path fill="#d9503f" stroke="#b93128" stroke-width="2" d="M-2-1C-4-20-25-30-25-48A25 25 0 1 1 25-48C25-30 4-20 2-1Q0 1-2-1Z"/><circle cy="-48" r="10" fill="#a5271f"/></g>
<g class="mark">${[1024, 1536].map(y => [397, 909, 1421, 1933].map(x => `<text x="${x}" y="${y}">For development purposes only</text>`).join('')).join('')}</g>
<text class="logo" x="572" y="1675"><tspan fill="#5286ec">G</tspan><tspan fill="#d85140">o</tspan><tspan fill="#f1bf42">o</tspan><tspan fill="#5286ec">g</tspan><tspan fill="#58a55c">l</tspan><tspan fill="#d85140">e</tspan></text>
</svg>`;

define('location-map', () => `
<style>
:host { display: block; position: relative; height: 800px; overflow: hidden; background: #5d626a; }
.map { display: block; width: 100%; height: 100%; }
.grey { fill: #5b6263; stroke: #54575b; stroke-width: 5; }
.gold { fill: #80764a; stroke: #756738; stroke-width: 5; }
.red { fill: #774b44; }
.labels { font: 28px Roboto, "Noto Sans Devanagari", "Noto Sans", sans-serif; paint-order: stroke; stroke: #666; stroke-width: 5px; stroke-linejoin: round; }
.k { fill: #2b3033; } .b { fill: #26344f; } .p { fill: #4f2a3a; } .o { fill: #3f301e; } .v { fill: #2c3048; } .r { fill: #26282a; font-size: 24px; font-weight: 500; }
.s { font-size: 22px; }
.h { font-size: 23px; font-weight: 400; stroke-width: 4px; }
.j { font-size: 26px; } .l { font-size: 29px; }
.mark { font: 30px "Liberation Sans", Arial, sans-serif; fill: #fff; fill-opacity: .5; }
.logo { font: 400 37px Roboto, sans-serif; paint-order: stroke; stroke: #c3c5c8; stroke-width: 6px; stroke-linejoin: round; }
.edge { position: absolute; top: 0; left: 0; right: 4px; height: 2px; background: #d9dadd; box-shadow: 0 2px 12px rgba(0,0,0,.3); }
button { display: grid; place-items: center; padding: 0; border: 0; background: #fff; color: #666; width: 80px; }
.full { position: absolute; top: 20px; right: 20px; height: 80px; border-radius: 4px; box-shadow: 0 2px 8px rgba(0,0,0,.3); }
.zoom { position: absolute; right: 20px; bottom: 48px; border-radius: 4px; background: #fff; box-shadow: 0 2px 8px rgba(0,0,0,.3); overflow: hidden; }
.zoom button { height: 80px; }
.zoom hr { margin: 0 10px; height: 2px; border: 0; background: #e6e6e6; }
.legal { position: absolute; right: 0; bottom: 0; display: flex; font: 20px/28px Roboto, sans-serif; background: rgba(255,255,255,.65); }
.legal a { color: #000; text-decoration: none; padding: 0 12px 0 10px; }
.legal a + a { border-left: 2px solid #6b6b6b; }
</style>
${mapSvg()}
<div class="edge"></div>
<button type="button" class="full" aria-label="Full screen"><svg width="36" height="36" viewBox="0 0 36 36" fill="none" stroke="currentColor" stroke-width="5"><path d="M2.500 12V2.500H12M24 2.500H33.500V12M33.500 24V33.500H24M12 33.500H2.500V24"/></svg></button>
<div class="zoom"><button type="button" aria-label="Zoom in"><svg width="36" height="36" viewBox="0 0 36 36" stroke="currentColor" stroke-width="8"><path d="M0 18H36M18 0V36"/></svg></button><hr><button type="button" aria-label="Zoom out"><svg width="36" height="8" viewBox="0 0 36 8" fill="currentColor"><path d="M0 0H36V8H0Z"/></svg></button></div>
<div class="legal"><a href="#">Keyboard shortcuts</a><a href="#">Map data ©2023</a><a href="#">Terms of Use</a><a href="#">Report a map error</a></div>`);
</script>
</body>
</html>
